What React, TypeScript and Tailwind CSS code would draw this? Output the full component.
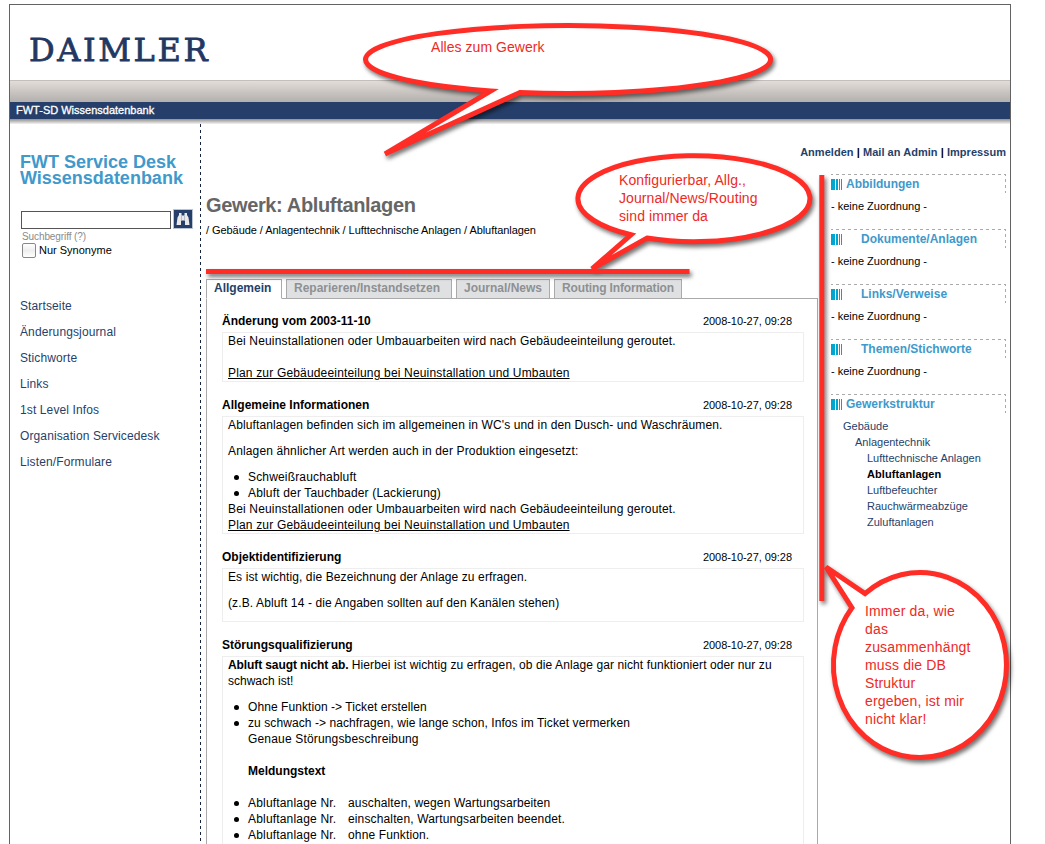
import type { ReactNode } from 'react';

function TabLabel({ children, active = false, width }: { children: ReactNode; active?: boolean; width: string }) {
  return (
    <div
      className={`h-5 shrink-0 border border-[#aaaaaa] pl-[7px] text-[12px] leading-[17px] font-bold ${width} ${
        active ? 'border-b-white bg-white text-[#263f6a]' : 'bg-[#dfe0e2] text-[#8e9092]'
      }`}
    >
      {children}
    </div>
  );
}

function Section({ title, children }: { title: string; children: ReactNode }) {
  return (
    <section className="mb-[15px] w-[582px]">
      <div className="mb-[3px] flex h-4 justify-between pr-3">
        <h2 className="text-[12px] leading-4 font-bold">{title}</h2>
        <span className="text-[11px] leading-4 tracking-[-0.05px]">2008-10-27, 09:28</span>
      </div>
      <div className="border border-[#eeeeee] pl-[5px] text-[12px] leading-4">{children}</div>
    </section>
  );
}

function Bullet({ children }: { children: ReactNode }) {
  return (
    <li className="flex">
      <span className="mt-[5.500px] mr-[9.500px] ml-[5.500px] size-[5px] shrink-0 rounded-full bg-black" />
      <span>{children}</span>
    </li>
  );
}

function SideHeading({ children, indent = false }: { children: ReactNode; indent?: boolean }) {
  return (
    <div className="relative flex h-[19px]">
      <svg className="absolute top-0 left-0" width="175" height="19">
        <path d="M0 .5H175M174.500 0V19" stroke="#aaa" strokeDasharray="3 3" strokeDashoffset="1" />
      </svg>
      <svg className="mt-[5px] shrink-0" width="11" height="11" fill="#00a5d0" shapeRendering="crispEdges">
        <path d="M0 0H4V11H0zM5 0H7V11H5zM8 0H9V11H8zM10 0H11V11H10z" />
      </svg>
      <h3 className={`text-[12px] leading-5 font-bold text-[#4099cb] ${indent ? 'ml-[19px]' : 'ml-1'}`}>{children}</h3>
    </div>
  );
}

const nav = ['Startseite', 'Änderungsjournal', 'Stichworte', 'Links', '1st Level Infos', 'Organisation Servicedesk', 'Listen/Formulare'];

export default function App() {
  return (
    <div className="relative h-[844px] w-[1045px] overflow-hidden bg-white pt-1 pl-[9px] font-['Liberation_Sans',Arial,sans-serif] text-black">
      <div className="h-[860px] w-[1002px] border border-[#636363]">
        <header>
          <div className="h-[75px] pt-[22px] pl-[19px]">
            <span className="block font-['DejaVu_Serif',serif] text-[32px] leading-[46px] tracking-[2.600px] text-[#223762] [-webkit-text-stroke:0.8px_#223762]">
              DAIMLER
            </span>
          </div>
          <div className="h-[22px] border-t border-[#c4bfbb] bg-linear-to-b from-[#e2ddd9] to-[#b3afac]" />
          <div className="h-[17px] bg-[#263f6a] pl-[6px] text-[11px] leading-[17px] text-white [-webkit-text-stroke:0.3px_white]">
            FWT-SD Wissensdatenbank
          </div>
          <div className="h-[5px] bg-linear-to-b from-[#928f8c] to-[#f5f4f3]" />
        </header>

        <div className="flex">
          <aside className="h-[740px] w-[190px] shrink-0 pl-[10px]">
            <h1 className="mt-[30px] text-[18px] leading-4 font-bold whitespace-nowrap text-[#4099cb]">
              FWT Service Desk
              <br />
              Wissensdatenbank
            </h1>
            <div className="mt-[23px] ml-px flex items-end gap-[2px]">
              <div className="h-[18px] w-[150px] border border-[#555555] bg-white" />
              <div className="flex size-5 items-center justify-center border border-[#bcc4d1] bg-[#263f6a]">
                <svg width="14" height="14" viewBox="0 0 14 14" fill="#e9e9ea">
                  <path d="M3 1H5.500V3.500H8.500V1H11V3L12.500 5.500L13.500 13H9V8.500H5V13H.5L1.500 5.500L3 3z" />
                  <path d="M5.500 4V8.500M8.500 4V8.500" stroke="#a9afb9" strokeWidth=".8" />
                </svg>
              </div>
            </div>
            <div className="mt-[2px] ml-[2px] h-[11px] text-[10px] leading-[12px] tracking-[-0.1px] text-[#8a8a8a]">Suchbegriff (?)</div>
            <label className="ml-[2px] flex h-4 items-center gap-[3px] text-[11px]">
              <span className="h-[15px] w-[14px] rounded-[2px] border border-[#888888] bg-linear-to-b from-white via-[#eeeeee] to-white" />
              Nur Synonyme
            </label>
            <nav className="mt-[35px] text-[12px] leading-[26px] tracking-[0.12px] text-[#263f6a]">
              {nav.map((item) => (
                <div key={item}>{item}</div>
              ))}
            </nav>
          </aside>

          <svg className="shrink-0" width="1" height="740">
            <path d="M.5 0V740" stroke="#14233f" strokeDasharray="3 3" />
          </svg>

          <main className="ml-[5px] w-[612px] shrink-0">
            <h1 className="mt-[69px] h-6 text-[20px] leading-6 font-bold tracking-[-0.360px] text-[#666666]">Gewerk: Abluftanlagen</h1>
            <div className="mt-[5px] h-4 text-[11px] leading-4 tracking-[-0.06px]">
              / Gebäude / Anlagentechnik / Lufttechnische Anlagen / Abluftanlagen
            </div>
            <div className="mt-[41px] flex">
              <TabLabel active width="w-[76px]">Allgemein</TabLabel>
              <div className="w-1 border-b border-[#aaaaaa]" />
              <TabLabel width="w-[166px]">Reparieren/Instandsetzen</TabLabel>
              <div className="w-1 border-b border-[#aaaaaa]" />
              <TabLabel width="w-[94px]">Journal/News</TabLabel>
              <div className="w-1 border-b border-[#aaaaaa]" />
              <TabLabel width="w-[128px]">
                <span className="tracking-[-0.14px]">Routing Information</span>
              </TabLabel>
              <div className="flex-1 border-b border-[#aaaaaa]" />
            </div>
            <div className="border-x border-[#aaaaaa] pt-[14px] pl-[15px]">
              <Section title="Änderung vom 2003-11-10">
                <p className="tracking-[0.165px]">Bei Neuinstallationen oder Umbauarbeiten wird nach Gebäudeeinteilung geroutet.</p>
                <p className="mt-4 tracking-[0.170px] underline">Plan zur Gebäudeeinteilung bei Neuinstallation und Umbauten</p>
              </Section>
              <Section title="Allgemeine Informationen">
                <p className="tracking-[0.130px]">Abluftanlagen befinden sich im allgemeinen in WC's und in den Dusch- und Waschräumen.</p>
                <p className="my-[10px] tracking-[0.140px]">Anlagen ähnlicher Art werden auch in der Produktion eingesetzt:</p>
                <ul className="tracking-[0.170px]">
                  <Bullet>Schweißrauchabluft</Bullet>
                  <Bullet>Abluft der Tauchbader (Lackierung)</Bullet>
                </ul>
                <p className="tracking-[0.165px]">Bei Neuinstallationen oder Umbauarbeiten wird nach Gebäudeeinteilung geroutet.</p>
                <p className="tracking-[0.170px] underline">Plan zur Gebäudeeinteilung bei Neuinstallation und Umbauten</p>
              </Section>
              <Section title="Objektidentifizierung">
                <p className="tracking-[0.115px]">Es ist wichtig, die Bezeichnung der Anlage zu erfragen.</p>
                <p className="my-[10px] tracking-[0.115px]">(z.B. Abluft 14 - die Angaben sollten auf den Kanälen stehen)</p>
              </Section>
              <Section title="Störungsqualifizierung">
                <p className="mb-[10px]">
                  <b className="tracking-[-0.1px]">Abluft saugt nicht ab.</b>{' '}
                  <span className="tracking-[0.095px]">Hierbei ist wichtig zu erfragen, ob die Anlage gar nicht funktioniert oder nur zu</span>
                  <br />
                  schwach ist!
                </p>
                <ul className="pb-4">
                  <Bullet>
                    <span className="tracking-[0.070px]">Ohne Funktion -&gt; Ticket erstellen</span>
                  </Bullet>
                  <Bullet>
                    <span className="tracking-[0.080px]">zu schwach -&gt; nachfragen, wie lange schon, Infos im Ticket vermerken</span>
                    <br />
                    <span className="tracking-[0.170px]">Genaue Störungsbeschreibung</span>
                    <b className="my-4 block">Meldungstext</b>
                  </Bullet>
                  {['auschalten, wegen Wartungsarbeiten', 'einschalten, Wartungsarbeiten beendet.', 'ohne Funktion.'].map((t) => (
                    <Bullet key={t}>
                      <span className="inline-block w-[100px] tracking-[0.180px]">Abluftanlage Nr.</span>
                      <span className="tracking-[0.140px]">{t}</span>
                    </Bullet>
                  ))}
                </ul>
              </Section>
            </div>
          </main>

          <aside className="ml-[13px] w-[175px] shrink-0">
            <div className="mt-5 flex h-[30px] justify-end text-[11px] leading-[17px] font-bold tracking-[0.040px] whitespace-nowrap">
              <span className="text-[#263f6a]">Anmelden</span>&nbsp;|&nbsp;
              <span className="text-[#263f6a]">Mail an Admin</span>&nbsp;|&nbsp;
              <span className="text-[#263f6a]">Impressum</span>
            </div>
            {['Abbildungen', 'Dokumente/Anlagen', 'Links/Verweise', 'Themen/Stichworte'].map((t, i) => (
              <div key={t} className="h-[55px]">
                <SideHeading indent={i > 0}>{t}</SideHeading>
                <div className="mt-[5px] text-[11px] leading-4">- keine Zuordnung -</div>
              </div>
            ))}
            <SideHeading>Gewerkstruktur</SideHeading>
            <div className="mt-[5px] ml-3 text-[11px] leading-4 text-[#263f6a]">
              <div>Gebäude</div>
              <div className="pl-3">Anlagentechnik</div>
              <div className="pl-6">
                <div>Lufttechnische Anlagen</div>
                <div className="font-bold tracking-[0.080px] text-black">Abluftanlagen</div>
                <div>Luftbefeuchter</div>
                <div>Rauchwärmeabzüge</div>
                <div>Zuluftanlagen</div>
              </div>
            </div>
          </aside>
        </div>
      </div>

      <svg
        className="absolute top-0 left-0 [filter:drop-shadow(2px_3px_2px_rgba(0,0,0,0.55))]"
        width="1045"
        height="844"
        fill="white"
        stroke="#ff2d26"
        strokeWidth="5"
      >
        <path d="M206 271.500H689.500M821.800 175V601" />
        <path d="M490.800 90.900A202.500 34 0 1 1 520 92.500L385 154z" />
        <path d="M631 234.800A116 43 0 1 1 647 238L592 269z" />
        <path d="M865 593.600A86.500 92.500 0 1 1 852 607.800L826 567z" />
      </svg>
      <div className="absolute top-[38px] left-[431px] text-[14px] leading-[18px] tracking-[0.050px] text-[#ee2a24]">Alles zum Gewerk</div>
      <div className="absolute top-[171px] left-[619px] text-[14px] leading-[18px] tracking-[0.080px] whitespace-nowrap text-[#ee2a24]">
        Konfigurierbar, Allg.,
        <br />
        Journal/News/Routing
        <br />
        sind immer da
      </div>
      <div className="absolute top-[602px] left-[865px] text-[14px] leading-[18px] tracking-[0.160px] whitespace-nowrap text-[#ee2a24]">
        Immer da, wie
        <br />
        das
        <br />
        zusammenhängt
        <br />
        muss die DB
        <br />
        Struktur
        <br />
        ergeben, ist mir
        <br />
        nicht klar!
      </div>
    </div>
  );
}
